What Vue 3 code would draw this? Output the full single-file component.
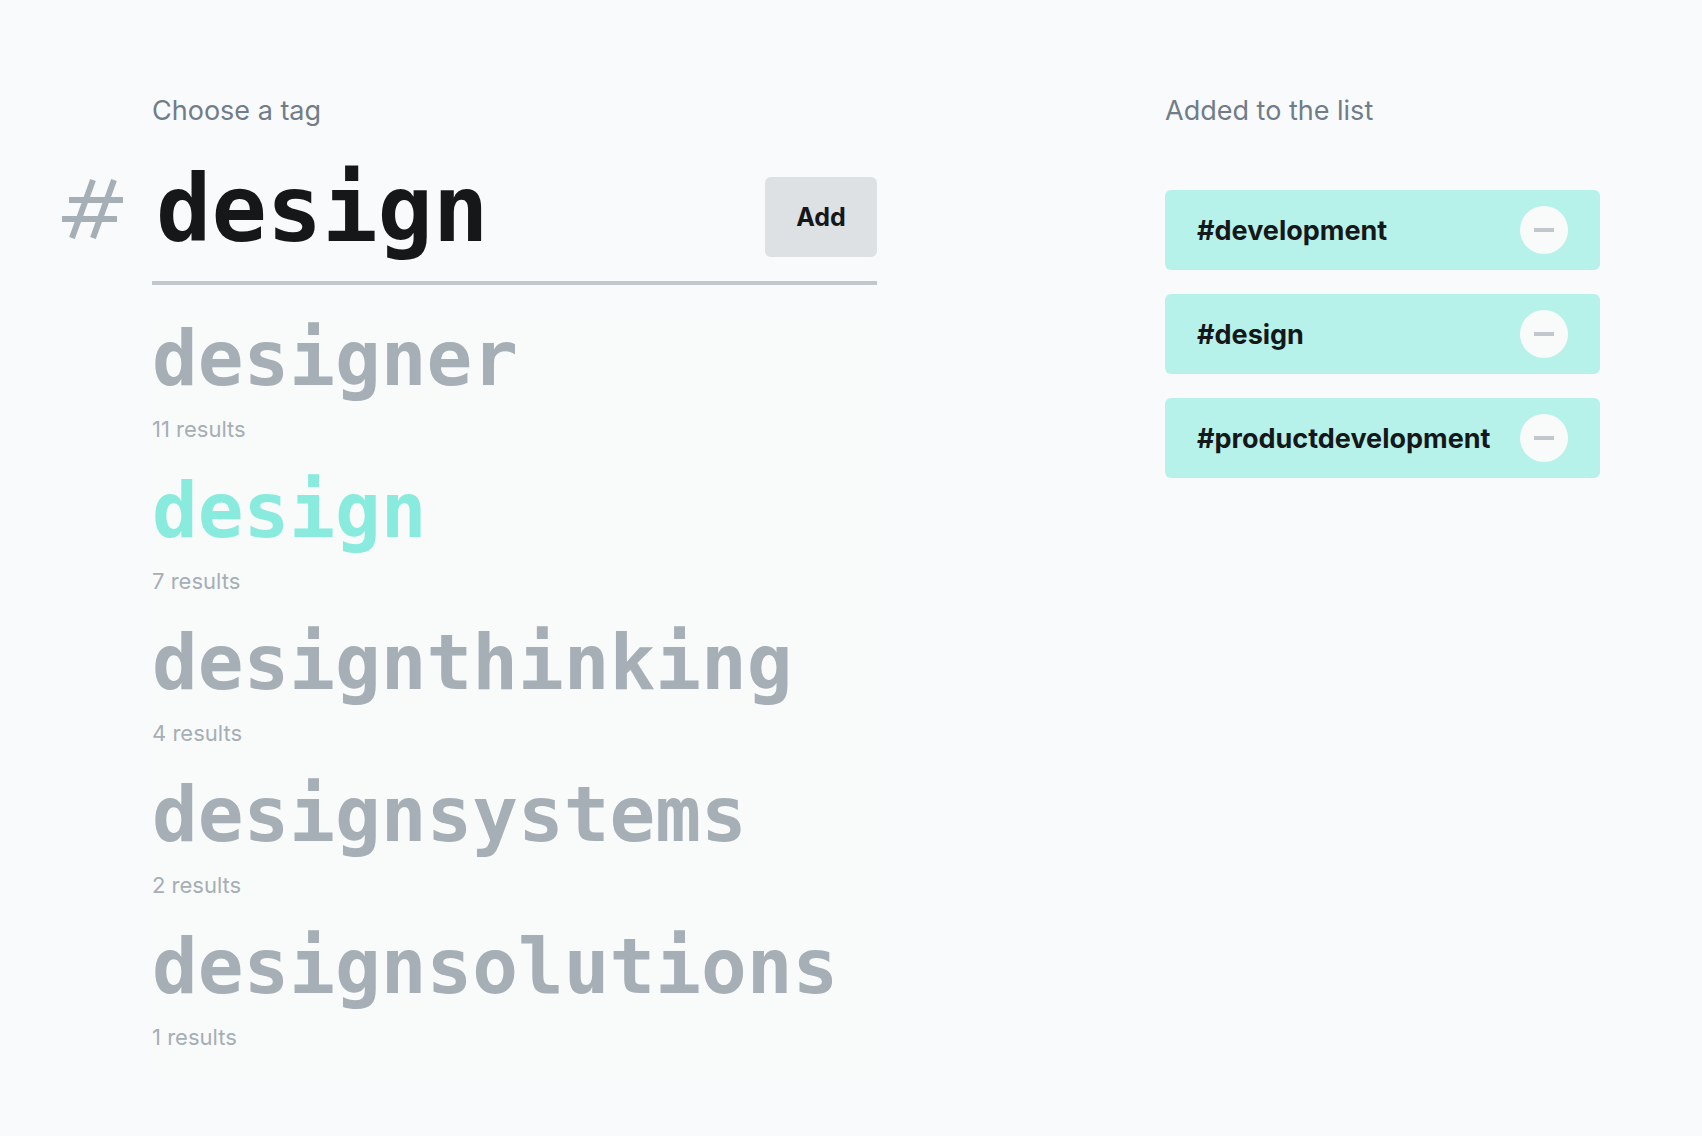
<script setup>
import { ref } from 'vue'

const query = ref('design')
const results = [
  { name: 'designer', count: 11 },
  { name: 'design', count: 7 },
  { name: 'designthinking', count: 4 },
  { name: 'designsystems', count: 2 },
  { name: 'designsolutions', count: 1 },
]
const added = ref(['development', 'design', 'productdevelopment'])

function add() {
  if (query.value && !added.value.includes(query.value)) added.value.push(query.value)
}
function remove(tag) {
  added.value = added.value.filter((t) => t !== tag)
}
</script>

<template>
  <main class="page">
    <form class="search" @submit.prevent="add">
      <label class="label" for="tag">Choose a tag</label>
      <div class="field">
        <svg class="hash" viewBox="0 0 62 60" aria-hidden="true">
          <path d="M31 1 10 59M52 1 31 59M7 21H61M0 40H55" />
        </svg>
        <input id="tag" v-model="query" class="query" type="text" autocomplete="off" spellcheck="false" />
        <button class="add" type="submit">Add</button>
      </div>
      <ul class="results">
        <li v-for="r in results" :key="r.name" class="result">
          <button type="button" class="name" :class="{ active: r.name === query }" @click="query = r.name">{{ r.name }}</button>
          <span class="count">{{ r.count }} results</span>
        </li>
      </ul>
    </form>

    <section class="added">
      <h2 class="label">Added to the list</h2>
      <ul class="tags">
        <li v-for="tag in added" :key="tag" class="tag">
          <span>#{{ tag }}</span>
          <button type="button" class="remove" :aria-label="`Remove ${tag}`" @click="remove(tag)"></button>
        </li>
      </ul>
    </section>
  </main>
</template>

<style>
body {
  margin: 0;
  background: #f9fafc;
}
</style>

<style scoped>
.page {
  display: flex;
  justify-content: space-between;
  align-items: flex-start;
  gap: 48px;
  box-sizing: border-box;
  min-height: 100vh;
  padding: 91px 102px 48px 62px;
  font-family: Inter, "Liberation Sans", sans-serif;
  color: #151719;
}
.search {
  flex: 0 1 815px;
  min-width: 0;
}
.label {
  display: block;
  margin: 0;
  font-size: 27px;
  font-weight: 400;
  line-height: 40px;
  color: #707d89;
}
.search .label,
.results {
  margin-left: 90px;
}
.field {
  display: flex;
  align-items: center;
  height: 128px;
  padding-top: 22px;
}
.hash {
  flex: none;
  width: 62px;
  height: 60px;
  margin-right: 28px;
  margin-bottom: 16px;
  fill: none;
  stroke: #a6aeb6;
  stroke-width: 6;
}
.query {
  flex: 1;
  min-width: 0;
  width: 0;
  height: 128px;
  box-sizing: border-box;
  padding: 0 0 16px 4px;
  border: 0;
  outline: 0;
  background: none;
  font: 700 92px "DejaVu Sans Mono", monospace;
  color: #151719;
}
.add {
  flex: none;
  width: 112px;
  height: 80px;
  border: 0;
  border-radius: 6px;
  background: #dde1e4;
  font: 700 25px Inter, sans-serif;
  color: #151719;
}
.results {
  list-style: none;
  margin-top: 0;
  margin-bottom: 0;
  padding: 0;
  border-top: 4px solid #c1c7cd;
}
.result {
  height: 152px;
  background: #f9fbfa;
}
.result:first-child {
  margin-top: 32px;
}
.name {
  display: block;
  padding: 0;
  border: 0;
  background: none;
  font: 700 76px/84px "DejaVu Sans Mono", monospace;
  color: #a6aeb6;
}
.name.active {
  color: #88ebdd;
}
.count {
  display: block;
  font-size: 22px;
  line-height: 56px;
  color: #a6aeb6;
}
.added {
  flex: 0 0 435px;
}
.tags {
  display: flex;
  flex-direction: column;
  gap: 24px;
  list-style: none;
  margin: 59px 0 0;
  padding: 0;
}
.tag {
  display: flex;
  justify-content: space-between;
  align-items: center;
  height: 80px;
  box-sizing: border-box;
  padding: 0 32px;
  border-radius: 6px;
  background: #b6f2ea;
  font-size: 27px;
  font-weight: 700;
}
.remove {
  display: grid;
  place-items: center;
  width: 48px;
  height: 48px;
  padding: 0;
  border: 0;
  border-radius: 50%;
  background: #f9fbfa;
}
.remove::before {
  content: "";
  width: 20px;
  height: 4px;
  background: #c1c7cd;
}
</style>
